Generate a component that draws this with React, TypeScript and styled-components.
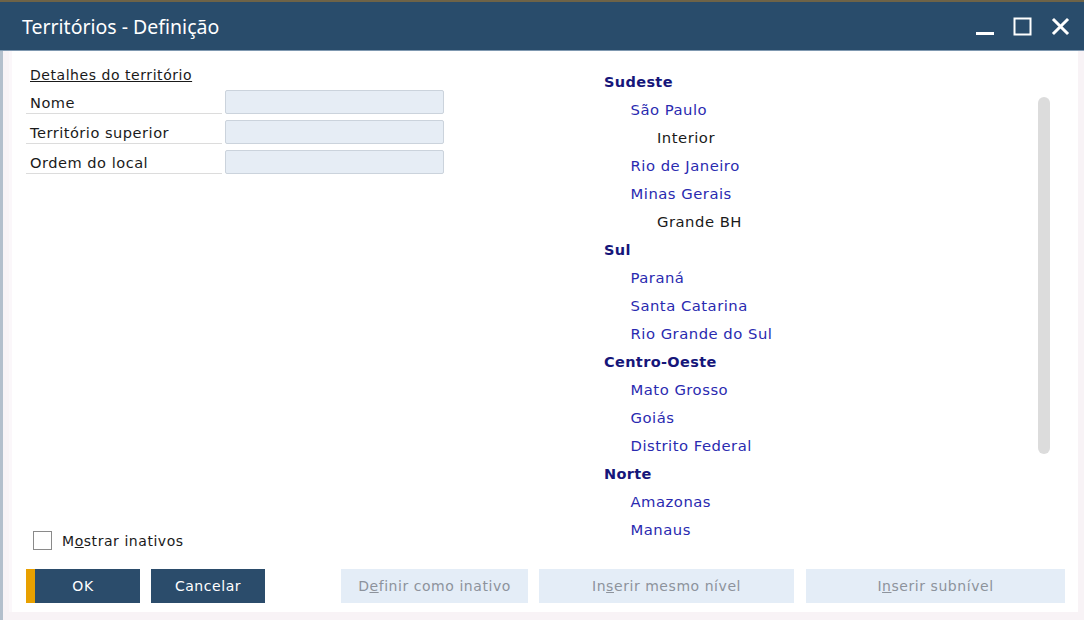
import React from "react";
import styled, { createGlobalStyle } from "styled-components";

const Global = createGlobalStyle`
  html, body { margin: 0; padding: 0; background: #ffffff; }
  body { font-family: "DejaVu Sans", sans-serif; letter-spacing: 0.55px; }
  * { box-sizing: border-box; }
`;

const Window = styled.div`
  width: 1084px;
  height: 620px;
  display: flex;
  flex-direction: column;
  border-top: 2px solid #6e6347;
  overflow: hidden;
`;

const TitleBar = styled.div`
  height: 49px;
  flex: none;
  background: #294c6b;
  border-bottom: 1px solid #7f98b0;
  display: flex;
  align-items: center;
  padding: 0 14px 0 22px;
`;

const Title = styled.div`
  flex: 1;
  color: #ffffff;
  font-family: "Noto Sans", "Open Sans", sans-serif;
  font-size: 19.5px;
  letter-spacing: 0;
`;

const Controls = styled.div`
  display: flex;
  align-items: center;
  gap: 19px;
`;

const CtrlIcon = styled.svg`
  width: 19px;
  height: 19px;
  display: block;
`;

const Frame = styled.div`
  flex: 1;
  display: flex;
  background: #f8f3f6;
  border-left: 3px solid #b3bfcc;
  padding: 0 6px 8px 6px;
  min-height: 0;
`;

const Panel = styled.div`
  flex: 1;
  background: #ffffff;
  border-left: 3px solid #fbf7fa;
  display: flex;
  flex-direction: column;
  padding: 0 11px 9px 14px;
`;

const Main = styled.div`
  flex: 1;
  display: flex;
  min-height: 0;
`;

const Left = styled.div`
  width: 578px;
  display: flex;
  flex-direction: column;
  padding-top: 14px;
`;

const SectionTitle = styled.div`
  font-size: 14px;
  color: #1a1a1a;
  text-decoration: underline;
  margin-left: 4px;
  height: 20px;
  line-height: 20px;
`;

const FieldRow = styled.div`
  display: flex;
  align-items: center;
  height: 30px;
`;

const FieldLabel = styled.div`
  width: 196px;
  height: 25px;
  line-height: 27px;
  font-size: 14.6px;
  letter-spacing: 0.5px;
  color: #1a1a1a;
  padding-left: 4px;
  border-bottom: 1px solid #dcdcdc;
  margin-top: 2px;
  white-space: nowrap;
`;

const FieldInput = styled.div`
  width: 219px;
  height: 24px;
  margin-left: 3px;
  margin-top: 4px;
  background: #e6edf5;
  border: 1px solid #cbd3dc;
  border-radius: 2px;
`;

const Spacer = styled.div`
  flex: 1;
`;

const CheckRow = styled.label`
  display: flex;
  align-items: center;
  gap: 10px;
  padding-left: 7px;
  margin-bottom: 19px;
  font-size: 14px;
  color: #1a1a1a;
`;

const Box = styled.span`
  width: 19px;
  height: 19px;
  border: 1px solid #8a8a8a;
  background: #ffffff;
  display: inline-block;
`;

const Right = styled.div`
  flex: 1;
  display: flex;
  padding-top: 17px;
`;

const Tree = styled.div`
  flex: 1;
  display: flex;
  flex-direction: column;
`;

const TreeItem = styled.div<{ $level: number }>`
  height: 28px;
  line-height: 28px;
  font-size: ${(p) => (p.$level === 0 ? "14.5px" : "14.8px")};
  white-space: nowrap;
  padding-left: ${(p) => p.$level * 26.5}px;
  font-weight: ${(p) => (p.$level === 0 ? 700 : 400)};
  letter-spacing: ${(p) => (p.$level === 0 ? "0.35px" : "0.5px")};
  color: ${(p) => (p.$level === 0 ? "#16167a" : p.$level === 1 ? "#2a2ab0" : "#1a1a1a")};
`;

const Scroll = styled.div`
  width: 12px;
  height: 357px;
  margin-top: 29px;
  margin-right: 17px;
  background: #dcdcdc;
  border-radius: 6px;
`;

const Buttons = styled.div`
  display: flex;
  align-items: center;
  height: 34px;
  flex: none;
`;

const PrimaryBtn = styled.button<{ $accent?: boolean }>`
  width: 114px;
  height: 34px;
  margin-right: 11px;
  border: none;
  background: #2b4c6b;
  color: #ffffff;
  font-family: inherit;
  letter-spacing: inherit;
  font-size: 14px;
  border-left: ${(p) => (p.$accent ? "9px solid #e8a000" : "none")};
  padding: ${(p) => (p.$accent ? "0 9px 0 0" : "0")};
  cursor: pointer;
`;

const GhostBtn = styled.button<{ $w: number; $gap: number }>`
  width: ${(p) => p.$w}px;
  height: 34px;
  margin-left: ${(p) => p.$gap}px;
  border: none;
  background: #e4edf7;
  color: #8d939c;
  font-family: inherit;
  letter-spacing: inherit;
  font-size: 14px;
`;

const U = styled.span`
  text-decoration: underline;
`;

const tree: [number, string][] = [
  [0, "Sudeste"],
  [1, "São Paulo"],
  [2, "Interior"],
  [1, "Rio de Janeiro"],
  [1, "Minas Gerais"],
  [2, "Grande BH"],
  [0, "Sul"],
  [1, "Paraná"],
  [1, "Santa Catarina"],
  [1, "Rio Grande do Sul"],
  [0, "Centro-Oeste"],
  [1, "Mato Grosso"],
  [1, "Goiás"],
  [1, "Distrito Federal"],
  [0, "Norte"],
  [1, "Amazonas"],
  [1, "Manaus"],
];

export default function App() {
  return (
    <>
      <Global />
      <Window>
        <TitleBar>
          <Title>Territórios - Definição</Title>
          <Controls>
            <CtrlIcon viewBox="0 0 19 19">
              <rect x="1" y="15" width="18" height="3" fill="#ffffff" />
            </CtrlIcon>
            <CtrlIcon viewBox="0 0 19 19">
              <rect x="1.5" y="1.5" width="16" height="16" fill="none" stroke="#ffffff" strokeWidth="2" />
            </CtrlIcon>
            <CtrlIcon viewBox="0 0 19 19">
              <path d="M3 3 L16 16 M16 3 L3 16" stroke="#ffffff" strokeWidth="3" strokeLinecap="square" />
            </CtrlIcon>
          </Controls>
        </TitleBar>
        <Frame>
          <Panel>
            <Main>
              <Left>
                <SectionTitle>Detalhes do território</SectionTitle>
                <FieldRow>
                  <FieldLabel>Nome</FieldLabel>
                  <FieldInput />
                </FieldRow>
                <FieldRow>
                  <FieldLabel>Território superior</FieldLabel>
                  <FieldInput />
                </FieldRow>
                <FieldRow>
                  <FieldLabel>Ordem do local</FieldLabel>
                  <FieldInput />
                </FieldRow>
                <Spacer />
                <CheckRow>
                  <Box />
                  <span>
                    M<U>o</U>strar inativos
                  </span>
                </CheckRow>
              </Left>
              <Right>
                <Tree>
                  {tree.map(([lvl, name], i) => (
                    <TreeItem key={i} $level={lvl}>
                      {name}
                    </TreeItem>
                  ))}
                </Tree>
                <Scroll />
              </Right>
            </Main>
            <Buttons>
              <PrimaryBtn $accent>OK</PrimaryBtn>
              <PrimaryBtn>Cancelar</PrimaryBtn>
              <GhostBtn $w={187} $gap={65}>
                D<U>e</U>finir como inativo
              </GhostBtn>
              <GhostBtn $w={255} $gap={11}>
                In<U>s</U>erir mesmo nível
              </GhostBtn>
              <GhostBtn $w={259} $gap={12}>
                I<U>n</U>serir subnível
              </GhostBtn>
            </Buttons>
          </Panel>
        </Frame>
      </Window>
    </>
  );
}
